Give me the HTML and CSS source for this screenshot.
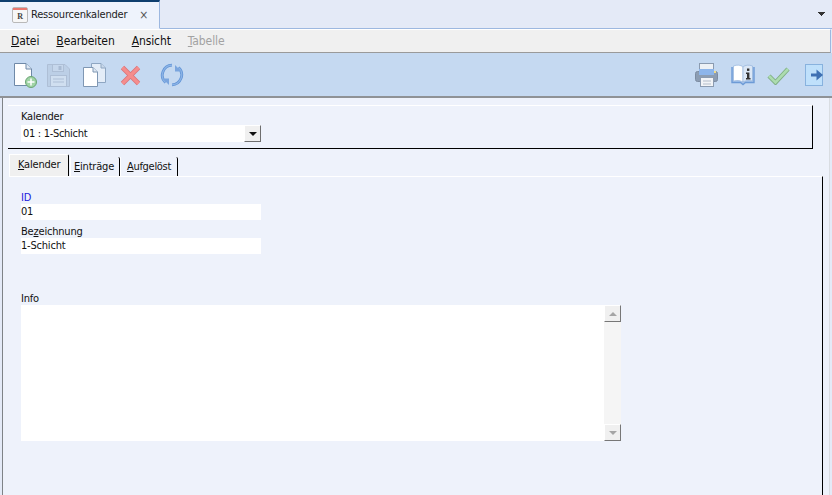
FILE: index.html
```html
<!DOCTYPE html>
<html lang="de">
<head>
    <meta charset="UTF-8">
    <title>Ressourcenkalender</title>
    <link rel="stylesheet" href="styles.css">
</head>
<body>

<div class="tabstrip">
    <div class="doc-tab">
        <svg class="doc-icon" width="16" height="16" viewBox="0 0 16 16">
            <rect x="0.5" y="0.5" width="15" height="15" rx="1.5" fill="#f7f7f7" stroke="#b9b9b9"/>
            <rect x="1" y="1" width="14" height="2" fill="#e9796f"/>
            <text x="8" y="12" text-anchor="middle" class="doc-icon-letter">R</text>
        </svg>
        <span class="doc-title">Ressourcenkalender</span>
        <span class="doc-close">×</span>
    </div>
    <svg class="strip-arrow" width="8" height="5" viewBox="0 0 8 5"><path d="M0 0H7V1H6V2H5V3H4V4H3V3H2V2H1V1H0Z" fill="#333"/></svg>
</div>

<div class="menubar">
    <span class="menu-item"><u>D</u>atei</span>
    <span class="menu-item"><u>B</u>earbeiten</span>
    <span class="menu-item"><u>A</u>nsicht</span>
    <span class="menu-item disabled"><u>T</u>abelle</span>
</div>

<div class="toolbar">
    <div class="tool-group">
        <!-- neu -->
        <svg class="tool tool-new" width="26" height="26" viewBox="0 0 26 26">
            <path d="M1.5 1.5H13L18.5 7V23.5H1.5Z" fill="#fff" stroke="#6f89a8"/>
            <path d="M13 1.5V7H18.5" fill="#dfe8f3" stroke="#6f89a8"/>
            <circle cx="18" cy="20" r="5.5" fill="#9fd3a5" stroke="#6aa573"/>
            <path d="M18 16.5V23.5M14.5 20H21.5" stroke="#fff" stroke-width="1.5"/>
        </svg>
        <!-- speichern (inaktiv) -->
        <svg class="tool tool-save" width="23" height="23" viewBox="0 0 23 23">
            <path d="M0.5 0.5H18L22.5 5V22.5H0.5Z" fill="#bccfe6" stroke="#aebfd6"/>
            <rect x="5.5" y="0.5" width="11" height="7" fill="#c6d7ec" stroke="#aebfd6"/>
            <rect x="11.5" y="2" width="3" height="4" fill="#a9bbd3"/>
            <rect x="3.5" y="11.5" width="16" height="11" fill="#d0dff0" stroke="#aebfd6"/>
            <path d="M6 15H17M6 18H17" stroke="#aebfd6"/>
        </svg>
        <!-- kopieren -->
        <svg class="tool tool-copy" width="23" height="24" viewBox="0 0 23 24">
            <path d="M8.5 0.5H18L22.5 5V19.5H8.5Z" fill="#e4edf8" stroke="#8ea6c2"/>
            <path d="M18 0.5V5H22.5" fill="#c9d8ea" stroke="#8ea6c2"/>
            <path d="M0.5 4.5H10L14.5 9V23.5H0.5Z" fill="#fff" stroke="#7f97b3"/>
            <path d="M10 4.5V9H14.5" fill="#dfe8f3" stroke="#7f97b3"/>
        </svg>
        <!-- loeschen -->
        <svg class="tool tool-delete" width="21" height="21" viewBox="0 0 21 21">
            <path d="M2.5 2.5L18.5 18.5M18.5 2.5L2.5 18.5" stroke="#d9747a" stroke-width="4.8"/>
            <path d="M2.5 2.5L18.5 18.5M18.5 2.5L2.5 18.5" stroke="#f58d8d" stroke-width="3.2"/>
        </svg>
        <!-- aktualisieren -->
        <svg class="tool tool-refresh" width="24" height="24" viewBox="0 0 24 24" fill="none">
            <path d="M12 2.2A10 10 0 0 0 5.5 19.5" stroke="#6295d6" stroke-width="2.8"/>
            <path d="M12 2.2A10 10 0 0 0 5.5 19.5" stroke="#8db4e6" stroke-width="1.2"/>
            <path d="M12 21.8A10 10 0 0 0 18.5 4.5" stroke="#6295d6" stroke-width="2.8"/>
            <path d="M12 21.8A10 10 0 0 0 18.5 4.5" stroke="#8db4e6" stroke-width="1.2"/>
            <path d="M2.5 15.5H9V22Z" fill="#7aa5de"/>
            <path d="M21.5 8.5H15V2Z" fill="#7aa5de"/>
        </svg>
    </div>
    <div class="tool-group">
        <!-- drucken -->
        <svg class="tool tool-print" width="23" height="24" viewBox="0 0 23 24">
            <rect x="4.5" y="0.5" width="14" height="8" fill="#edf1f6" stroke="#8b9bb0"/>
            <rect x="0.5" y="8.5" width="22" height="10" rx="2" fill="#8c9db3" stroke="#7c8ca2"/>
            <rect x="4" y="6" width="15" height="6" fill="#8db5ea"/>
            <rect x="19" y="8" width="2" height="2" fill="#f0dd8a"/>
            <rect x="5.5" y="14.5" width="13" height="9" fill="#f2f4f7" stroke="#8b9bb0"/>
            <path d="M8 18H16M8 21H16" stroke="#b3bdca"/>
        </svg>
        <!-- info -->
        <svg class="tool tool-info" width="24" height="22" viewBox="0 0 24 22">
            <path d="M1 3V18.5H9.5L12 20.5L14.5 18.5H23V3" fill="#a9c6ec" stroke="#6d9bd6" stroke-width="1.4"/>
            <path d="M2.5 2C6 0.5 10 1 12 3V18C10 16.5 6 16 2.5 17Z" fill="#fff" stroke="#8bacd6" stroke-width="0.6"/>
            <path d="M21.5 2C18 0.5 14 1 12 3V18C14 16.5 18 16 21.5 17Z" fill="#dbe7f6" stroke="#8bacd6" stroke-width="0.6"/>
            <rect x="16" y="4.5" width="2.4" height="2.4" fill="#333"/>
            <path d="M15 8.5H18.4V14H19.5V15.5H15V14H16V10H15Z" fill="#333"/>
        </svg>
        <!-- ok -->
        <svg class="tool tool-ok" width="23" height="19" viewBox="0 0 23 19">
            <path d="M2 10L8.5 16.5L21 3" fill="none" stroke="#7fae84" stroke-width="4.4"/>
            <path d="M2 10L8.5 16.5L21 3" fill="none" stroke="#acdcaf" stroke-width="2.6"/>
        </svg>
        <!-- schliessen -->
        <svg class="tool tool-exit" width="18" height="22" viewBox="0 0 18 22">
            <rect x="0.5" y="0.5" width="17" height="21" fill="#bfe0fb" stroke="#88b2de"/>
            <path d="M6 11H12" stroke="#3f70b3" stroke-width="3"/>
            <path d="M11.5 5.5L18 11L11.5 16.5Z" fill="#3f70b3"/>
        </svg>
    </div>
</div>

<div class="content">
    <div class="calendar-box">
        <div class="label">Kalender</div>
        <div class="combo">
            <span class="combo-value">01 : 1-Schicht</span>
            <span class="combo-btn"><span class="arrow-down"></span></span>
        </div>
    </div>

    <div class="tabs">
        <div class="tab active"><u>K</u>alender</div>
        <div class="tab tab-entries"><u>E</u>inträge</div>
        <div class="tab tab-resolved"><u>A</u>ufgelöst</div>
    </div>

    <div class="tab-page">
        <div class="label label-id">ID</div>
        <div class="field">01</div>
        <div class="label label-name">Be<u>z</u>eichnung</div>
        <div class="field">1-Schicht</div>
        <div class="label label-info">Info</div>
        <div class="memo">
            <div class="memo-text"></div>
            <div class="scrollbar">
                <span class="scroll-btn"><span class="arrow-up"></span></span>
                <span class="scroll-btn"><span class="arrow-down grey"></span></span>
            </div>
        </div>
    </div>
</div>

</body>
</html>
```

FILE: styles.css
```css
* {
    margin: 0;
    padding: 0;
    box-sizing: border-box;
}

html, body {
    height: 495px;
    overflow: hidden;
}

body {
    font-family: "DejaVu Sans Condensed", "DejaVu Sans", sans-serif;
    font-stretch: condensed;
    font-size: 11px;
    letter-spacing: -0.2px;
    color: #111;
    background-color: #e4eaf7;
}

.tabstrip {
    display: flex;
    justify-content: space-between;
    align-items: center;
    height: 29px;
    padding-right: 6px;
    background: #e4eaf7;
    border-bottom: 1px solid #9db8e0;
}

.doc-tab {
    display: flex;
    align-items: center;
    width: 160px;
    height: 29px;
    padding: 0 0 0 12px;
    background: #eef3fc;
    border-top: 2px solid #0f3f6e;
    border-right: 1px solid #9db8e0;
    border-bottom: 1px solid #eef3fc;
}

.doc-icon {
    flex: none;
}

.doc-icon-letter {
    font-size: 8px;
    font-weight: bold;
    font-family: "Liberation Serif", serif;
    fill: #444;
}

.doc-title {
    margin-left: 3px;
    color: #222;
}

.doc-close {
    margin-left: 12px;
    font-size: 12px;
    color: #555;
}

.menubar {
    display: flex;
    align-items: center;
    height: 24px;
    margin: 0 1px 0 0;
    padding-left: 11px;
    gap: 17px;
    background: #f0f0f0;
    border-top: 1px solid #fff;
    border-bottom: 1px solid #9a9a9a;
    border-right: 1px solid #9db8e0;
    font-size: 12px;
    letter-spacing: -0.1px;
}

.menu-item.disabled {
    color: #a2a2a2;
}

.toolbar {
    display: flex;
    justify-content: space-between;
    align-items: center;
    height: 45px;
    padding: 1px 9px 0 13px;
    background: #c5d9f1;
    border-bottom: 2px solid #8f9296;
}

.tool-group {
    display: flex;
    align-items: center;
}

.tool-save { margin-left: 8px; }
.tool-copy { margin-left: 13px; }
.tool-delete { margin-left: 14px; }
.tool-refresh { margin-left: 19px; }

.tool-info { margin-left: 13px; }
.tool-ok { margin-left: 12px; }
.tool-exit { margin-left: 15px; }

.content {
    height: 397px;
    margin: 0 2px;
    padding: 7px 0 0 5px;
    background-color: #eef2fb;
    border-left: 1px solid #7f8387;
    border-right: 1px solid #d9dde2;
}

.calendar-box {
    width: 805px;
    height: 44px;
    padding: 3px 0 0 13px;
    border-top: 1px solid #fff;
    border-right: 1px solid #000;
    border-bottom: 1px solid #000;
}

.label {
    line-height: 15px;
}

.combo {
    display: flex;
    justify-content: space-between;
    align-items: center;
    width: 240px;
    height: 17px;
    margin-top: 1px;
    padding-left: 2px;
    background: #fff;
    letter-spacing: -0.3px;
}

.combo-btn {
    display: flex;
    align-items: center;
    justify-content: center;
    width: 17px;
    height: 17px;
    background: #f0f0f0;
    border: 1px solid;
    border-color: #fff #6e6e6e #6e6e6e #fff;
}

.arrow-down {
    width: 0;
    height: 0;
    border-left: 4px solid transparent;
    border-right: 4px solid transparent;
    border-top: 4px solid #111;
}

.arrow-down.grey {
    border-top-color: #a5a5a5;
}

.arrow-up {
    width: 0;
    height: 0;
    border-left: 4px solid transparent;
    border-right: 4px solid transparent;
    border-bottom: 4px solid #a5a5a5;
}

.tabs {
    display: flex;
    height: 22px;
    margin-top: 5px;
    padding-left: 1px;
}

.tab {
    margin-top: 3px;
    padding-top: 3px;
    border-left: 1px solid #fff;
    border-right: 1px solid #000;
    border-top-right-radius: 2px;
}

.tab.active {
    width: 60px;
    margin-top: 0;
    padding: 3px 0 0 8px;
    background: #f0f0f0;
    border-top: 1px solid #fff;
}

.tab-entries {
    width: 50px;
    margin-left: 1px;
    padding-left: 3px;
}

.tab-resolved {
    width: 58px;
    padding-left: 6px;
    letter-spacing: -0.3px;
}

.tab-page {
    width: 814px;
    height: 320px;
    margin-left: 1px;
    padding: 12px 0 0 12px;
    border-top: 1px solid #fff;
    border-right: 1px solid #000;
}

.tab-page .label {
    height: 15px;
    line-height: 17px;
}

.label-id {
    color: #2222dd;
}

.tab-page .label-name {
    margin-top: 3px;
}

.tab-page .label-info {
    margin-top: 36px;
}

.field {
    width: 240px;
    height: 16px;
    line-height: 16px;
    background: #fff;
}

.memo {
    display: flex;
    width: 600px;
    height: 136px;
    background: #fff;
}

.memo-text {
    flex: 1;
}

.scrollbar {
    display: flex;
    flex-direction: column;
    justify-content: space-between;
    width: 17px;
    background: #f5f5f5;
}

.scroll-btn {
    display: flex;
    align-items: center;
    justify-content: center;
    height: 17px;
    background: #f0f0f0;
    border: 1px solid;
    border-color: #fff #777 #777 #fff;
}
```
